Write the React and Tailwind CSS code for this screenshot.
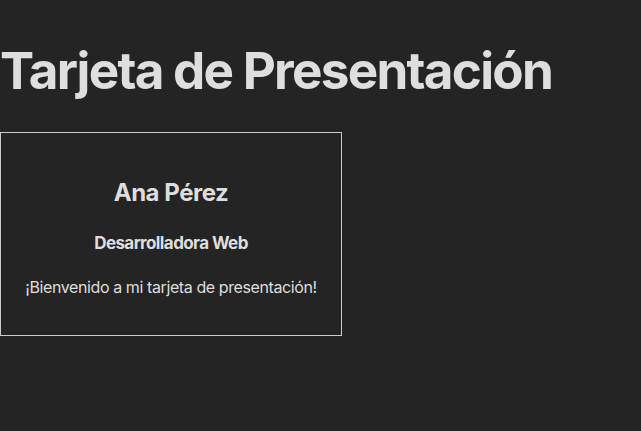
export default function App() {
  return (
    <div className="min-h-[431px] bg-[#242424] text-[#dedede] font-['Inter',sans-serif] leading-[1.5] antialiased">
      <h1 className="pt-[42px] text-[51.2px] leading-[1.1] font-bold tracking-[-0.034em]">Tarjeta de Presentación</h1>
      <div className="mt-[34px] w-[342px] border border-[#cccccc] p-5 text-center">
        <h2 className="mt-[24px] text-2xl font-bold tracking-[-0.02em]">Ana Pérez</h2>
        <h3 className="mt-[22px] text-[17px] font-bold tracking-[-0.035em]">Desarrolladora Web</h3>
        <p className="mt-[18px] mb-4 text-base tracking-[-0.025em]">¡Bienvenido a mi tarjeta de presentación!</p>
      </div>
    </div>
  );
}
